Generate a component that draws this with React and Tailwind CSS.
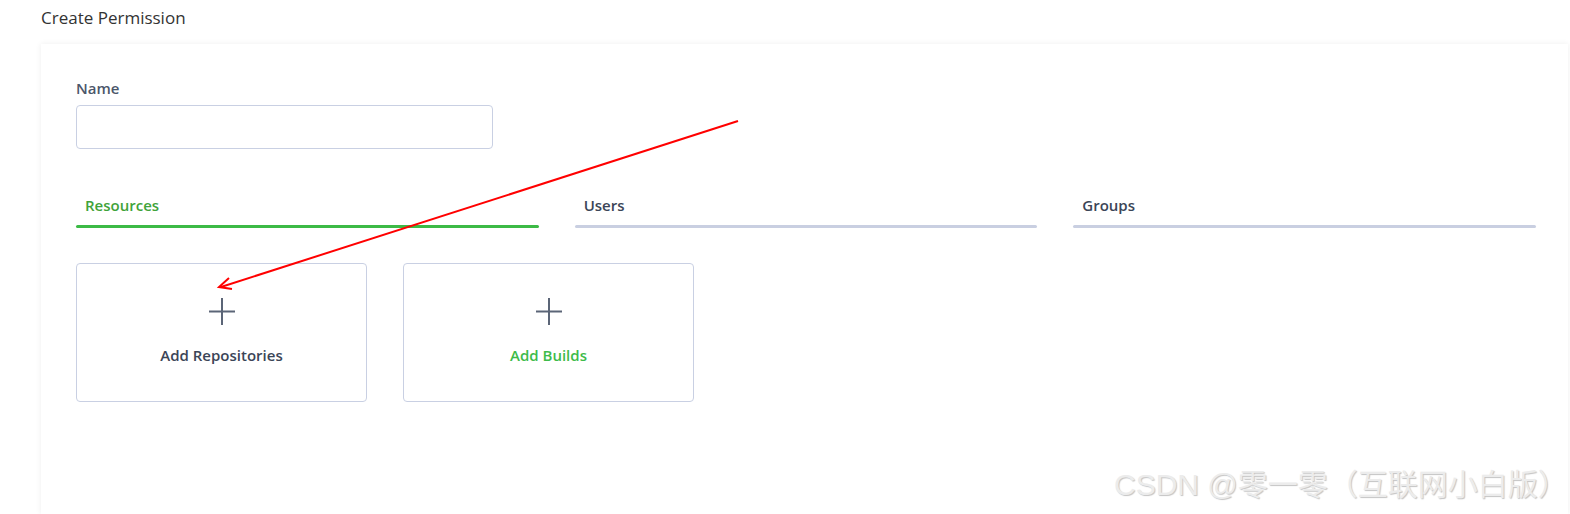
import React from "react";

function Plus() {
  return (
    <svg width="26" height="27" viewBox="0 0 26 27" className="block">
      <line x1="13" y1="0" x2="13" y2="27" stroke="#5b6577" strokeWidth="2" />
      <line x1="0" y1="13.5" x2="26" y2="13.5" stroke="#5b6577" strokeWidth="2" />
    </svg>
  );
}

function AddCard({ label, green }) {
  return (
    <div className="w-[291px] h-[139px] border border-[#c9d0e3] rounded-[4px] flex flex-col items-center pt-[34px]">
      <Plus />
      <div className={`mt-[19px] text-[15px] font-semibold leading-[22px] ${green ? "text-[#3dbb4a]" : "text-[#3b4557]"}`}>
        {label}
      </div>
    </div>
  );
}

export default function App() {
  const font = { fontFamily: '"Open Sans", "Noto Sans", sans-serif' };
  return (
    <div className="relative w-full h-[514px] bg-white overflow-hidden" style={font}>
      <div className="pl-[41px] pt-[5px] h-[44px] text-[17px] text-[#333]">Create Permission</div>
      <div className="ml-[41px] mr-[2px] h-[470px] bg-white shadow-[0_0_6px_rgba(0,0,0,0.07)] pl-[35px] pr-[33px] pt-[34px]">
        <div className="text-[15px] font-semibold text-[#4b566a] leading-[21px]">Name</div>
        <div className="mt-[6px] w-[417px] h-[44px] border border-[#c9d0e3] rounded-[4px]" />
        <div className="mt-[46px] grid grid-cols-3 gap-x-[36px] w-[1460px]">
          <div>
            <div className="pl-[9px] text-[15px] font-semibold text-[#3fa33a] leading-[21px]">Resources</div>
            <div className="mt-[9px] h-[3px] rounded-full bg-[#3cba46]" />
          </div>
          <div>
            <div className="pl-[9px] text-[15px] font-semibold text-[#3b4557] leading-[21px]">Users</div>
            <div className="mt-[9px] h-[3px] rounded-full bg-[#c9cfe1]" />
          </div>
          <div>
            <div className="pl-[9px] text-[15px] font-semibold text-[#3b4557] leading-[21px]">Groups</div>
            <div className="mt-[9px] h-[3px] rounded-full bg-[#c9cfe1]" />
          </div>
        </div>
        <div className="mt-[35px] flex gap-[36px]">
          <AddCard label="Add Repositories" />
          <AddCard label="Add Builds" green />
        </div>
      </div>
      <svg className="absolute left-0 top-0 pointer-events-none" width="1570" height="514">
        <line x1="738" y1="121" x2="221" y2="287" stroke="#ff0000" strokeWidth="2" />
        <polyline points="229,278 219,287 232,289" fill="none" stroke="#ff0000" strokeWidth="2" />
      </svg>
      <div
        className="absolute left-[1114px] top-[462px] text-[30px] text-[#ececec] whitespace-nowrap"
        style={{ fontFamily: '"Liberation Sans", "Noto Sans CJK SC", sans-serif', textShadow: "1px 1px 1px #c4c4c4" }}
      >
        CSDN @零一零（互联网小白版）
      </div>
    </div>
  );
}
